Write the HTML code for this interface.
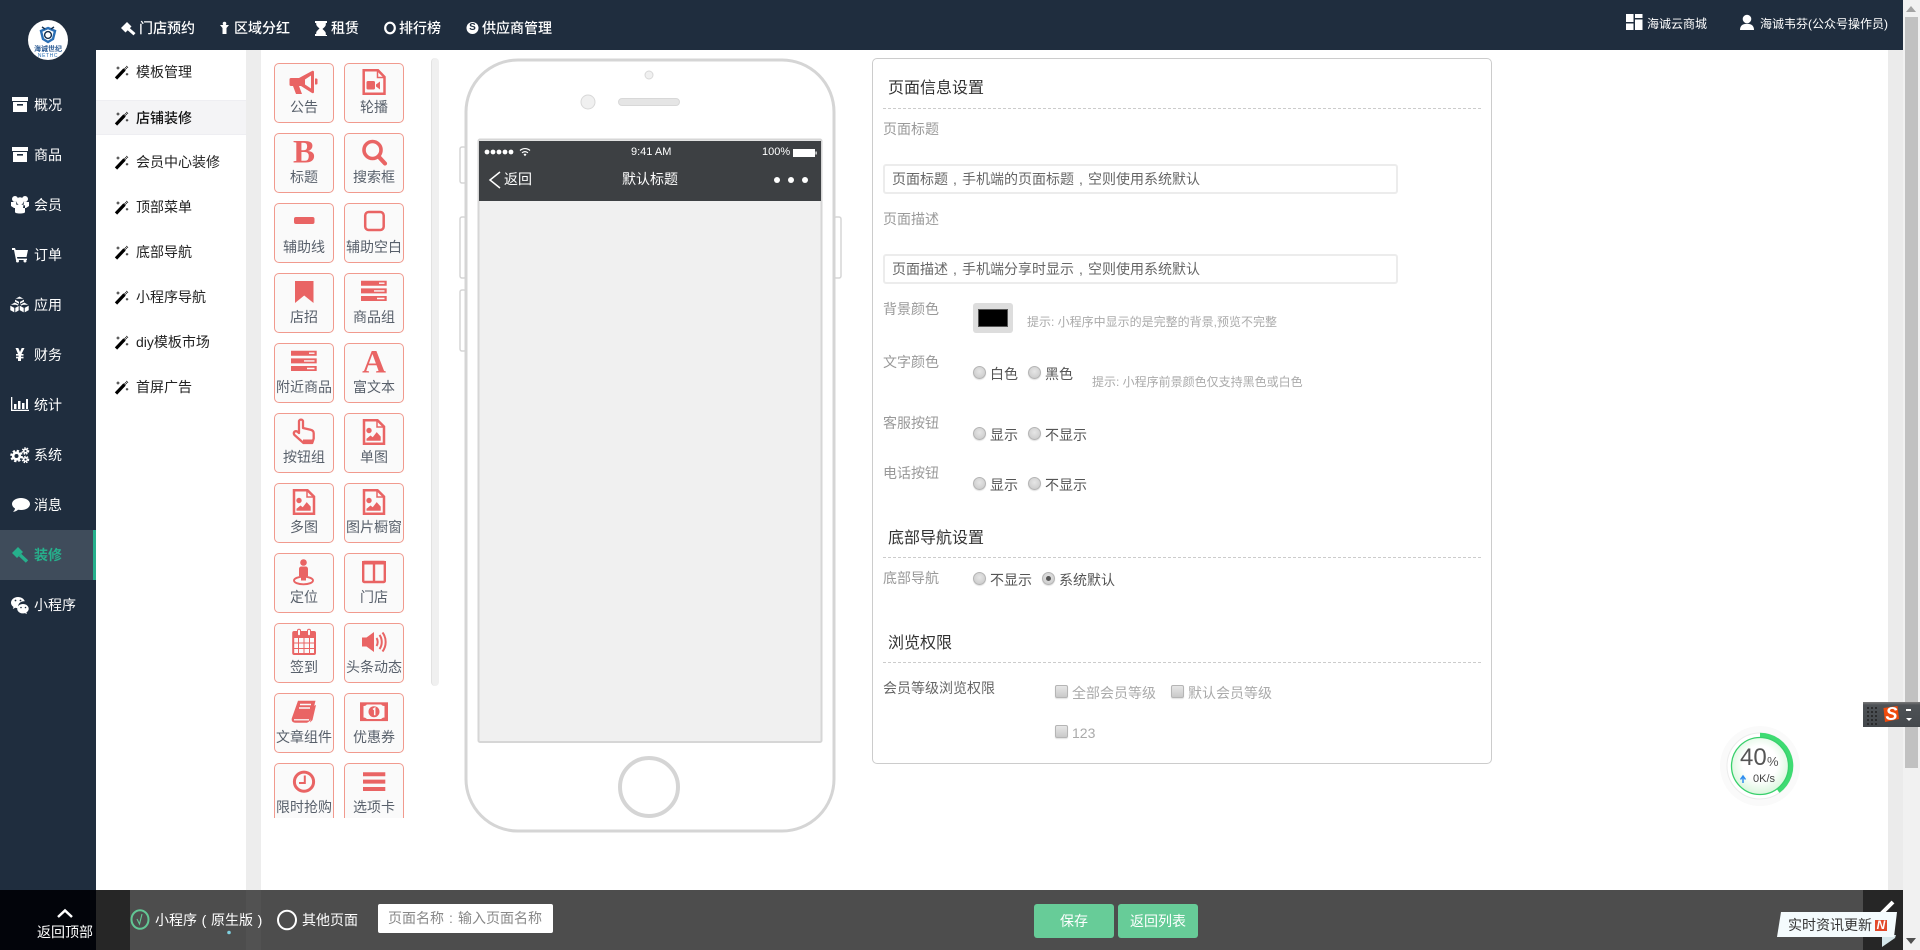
<!DOCTYPE html>
<html lang="zh">
<head>
<meta charset="utf-8">
<title>店铺装修</title>
<style>
html,body{margin:0;padding:0;width:1920px;height:950px;overflow:hidden;background:#fff}
body{font-family:"Liberation Sans","Noto Sans CJK SC",sans-serif;font-size:14px;color:#333;position:relative}
.a{position:absolute}
.t{position:absolute;white-space:nowrap;line-height:20px}
.w{color:#fff}
.lb{color:#999}
.p{display:inline-block;width:14px;text-align:center}
.r{position:absolute;width:11px;height:11px;border-radius:50%;border:1px solid #b5b5b5;background:radial-gradient(circle at 50% 40%,#e6e6e6,#c6c6c6);box-shadow:0 1px 1px rgba(0,0,0,.12)}
.k{position:absolute;width:11px;height:11px;border-radius:2px;border:1px solid #b5b5b5;background:linear-gradient(#e6e6e6,#c9c9c9);box-shadow:0 1px 1px rgba(0,0,0,.12)}
.h{position:absolute;white-space:nowrap;line-height:20px;font-size:16px;color:#333}
.d{position:absolute;left:883px;width:598px;border-top:1px dashed #ccc;height:0}
.in{position:absolute;left:883px;width:504px;height:26px;border:2px solid #ececec;border-radius:3px;line-height:26px;padding-left:7px;color:#666;background:#fff;white-space:nowrap}
.rt{color:#555}
.hint{font-size:12px;color:#aaa}
#cards{position:absolute;left:274px;top:63px;width:140px;height:755px;overflow:hidden}
.c{float:left;position:relative;box-sizing:border-box;width:60px;height:60px;margin:0 10px 10px 0;border:1px solid #f19a8e;border-radius:5px;background:#fafafa}
.c svg{position:absolute;left:-1px;top:-1px;width:60px;height:36px;overflow:visible}
.c span{position:absolute;left:-3px;right:-3px;top:33px;text-align:center;line-height:20px;color:#58606b;white-space:nowrap}
.sm{position:absolute;left:136px;color:#222;line-height:20px;white-space:nowrap}
</style>
</head>
<body>

<!-- layout blocks -->
<div class="a" style="left:0;top:0;width:96px;height:950px;background:#1f2d3e"></div>
<div class="a" style="left:96px;top:0;width:1807px;height:50px;background:#1f2d3e"></div>
<div class="a" style="left:246px;top:50px;width:15px;height:840px;background:#ededed"></div>
<div class="a" style="left:1888px;top:50px;width:15px;height:840px;background:#ebebeb"></div>
<div class="a" style="left:96px;top:100px;width:150px;height:35px;background:#f4f4f6;border-top:1px solid #eeeef2;border-bottom:1px solid #eeeef2;box-sizing:border-box"></div>
<div class="a" style="left:0;top:530px;width:93px;height:50px;background:#3f4c5b;border-right:3px solid #26b08c"></div>

<!-- scrollbar -->
<div class="a" style="left:1903px;top:0;width:17px;height:950px;background:#f1f1f1"></div>
<div class="a" style="left:1905px;top:17px;width:13px;height:751px;background:#c1c1c1"></div>

<!-- icon column scrollbar -->
<div class="a" style="left:431px;top:58px;width:8px;height:628px;background:#f0f0f0;border-left:1px solid #e2e2e2;box-sizing:border-box;border-radius:4px"></div>

<!-- global icons + phone -->
<svg class="a" style="left:0;top:0" width="1920" height="950" viewBox="0 0 1920 950" fill="none">
  <!-- scrollbar arrows -->
  <path d="M1911 6l5 6h-10z" fill="#a3a3a3"/>
  <path d="M1911 944l-5-6h10z" fill="#505050"/>

  <!-- logo -->
  <ellipse cx="48" cy="40" rx="20" ry="20" fill="#fff"/>
  <path d="M48 28l7 3-2 8-5 3-5-3-2-8z" stroke="#2a6fb5" stroke-width="2.4" fill="#fff"/>
  <circle cx="48" cy="35" r="3.4" stroke="#15304f" stroke-width="1.4"/>
  <path d="M42 27l3 2M54 27l-3 2" stroke="#15304f" stroke-width="1.4"/>

  <!-- wand icons -->
  <g id="wands" stroke-linecap="butt">
    <g transform="translate(115,65)"><path d="M1 13.5L9.500 4.500" stroke="#000" stroke-width="3.200"/><path d="M9.500 4.500L12.500 1.500" stroke="#333" stroke-width="2.400" stroke-dasharray="1 .6"/><path d="M3 1.500v3M1.500 3h3M12 8v2.500M10.800 9.200h2.500" stroke="#222" stroke-width=".9"/></g>
    <g transform="translate(115,111)"><path d="M1 13.500L9.500 4.500" stroke="#000" stroke-width="3.200"/><path d="M9.500 4.500L12.500 1.500" stroke="#333" stroke-width="2.400" stroke-dasharray="1 .6"/><path d="M3 1.500v3M1.500 3h3M12 8v2.500M10.800 9.200h2.500" stroke="#222" stroke-width=".9"/></g>
    <g transform="translate(115,155)"><path d="M1 13.500L9.500 4.500" stroke="#000" stroke-width="3.200"/><path d="M9.500 4.500L12.500 1.500" stroke="#333" stroke-width="2.400" stroke-dasharray="1 .6"/><path d="M3 1.500v3M1.500 3h3M12 8v2.500M10.800 9.200h2.500" stroke="#222" stroke-width=".9"/></g>
    <g transform="translate(115,200)"><path d="M1 13.500L9.500 4.500" stroke="#000" stroke-width="3.200"/><path d="M9.500 4.500L12.500 1.500" stroke="#333" stroke-width="2.400" stroke-dasharray="1 .6"/><path d="M3 1.500v3M1.500 3h3M12 8v2.500M10.800 9.200h2.500" stroke="#222" stroke-width=".9"/></g>
    <g transform="translate(115,245)"><path d="M1 13.500L9.500 4.500" stroke="#000" stroke-width="3.200"/><path d="M9.500 4.500L12.500 1.500" stroke="#333" stroke-width="2.400" stroke-dasharray="1 .6"/><path d="M3 1.500v3M1.500 3h3M12 8v2.500M10.800 9.200h2.500" stroke="#222" stroke-width=".9"/></g>
    <g transform="translate(115,290)"><path d="M1 13.500L9.500 4.500" stroke="#000" stroke-width="3.200"/><path d="M9.500 4.500L12.500 1.500" stroke="#333" stroke-width="2.400" stroke-dasharray="1 .6"/><path d="M3 1.500v3M1.500 3h3M12 8v2.500M10.800 9.200h2.500" stroke="#222" stroke-width=".9"/></g>
    <g transform="translate(115,335)"><path d="M1 13.500L9.500 4.500" stroke="#000" stroke-width="3.200"/><path d="M9.500 4.500L12.500 1.500" stroke="#333" stroke-width="2.400" stroke-dasharray="1 .6"/><path d="M3 1.500v3M1.500 3h3M12 8v2.500M10.800 9.200h2.500" stroke="#222" stroke-width=".9"/></g>
    <g transform="translate(115,380)"><path d="M1 13.500L9.500 4.500" stroke="#000" stroke-width="3.200"/><path d="M9.500 4.500L12.500 1.500" stroke="#333" stroke-width="2.400" stroke-dasharray="1 .6"/><path d="M3 1.500v3M1.500 3h3M12 8v2.500M10.800 9.200h2.500" stroke="#222" stroke-width=".9"/></g>
  </g>

  <!-- sidebar icons -->
  <g fill="#fff">
    <path d="M12 97h16v4H12zM13 102h14v10H13zM17 104v1.600h6V104z" fill-rule="evenodd"/>
    <path d="M12 147h16v4H12zM13 152h14v10H13zM17 154v1.600h6V154z" fill-rule="evenodd"/>
    <circle cx="15" cy="199" r="3"/><circle cx="25" cy="199" r="3"/><circle cx="20" cy="201" r="3.700"/>
    <path d="M11 202h5l1 6-3 0-3-2zM29 202h-5l-1 6 3 0 3-2zM15 206c0-1 2-1.500 5-1.500s5 .5 5 1.500v6c0 1-2 1.500-5 1.500s-5-.5-5-1.500z"/>
    <path d="M12 248h3l.7 2h12.300l-1.500 7H17l.4 1.600H27V260H16l-2-10h-2z"/><circle cx="17.500" cy="261" r="1.500"/><circle cx="25" cy="261" r="1.500"/>
    <path d="M15.500 348h2.800l1.700 4 1.700-4h2.800l-3 6h2v1.600h-2.500v1.200h2.500v1.600h-2.500v2.600h-3v-2.600H16v-1.600h2.500v-1.200H16v-1.600h2z"/>
    <path d="M11 397h1.300v12.700H29v1.300H11zM14 404h2.500v5H14zM18 401h2.500v8H18zM22 403h2.500v6H22zM26 399h2v10h-2z"/>
    <path d="M21 510c-1 0-2 0-3-.2-1 1-3 2-5 2 1-1 2-2 2-3.300-2-1.200-3-3-3-4.500 0-3.500 4-6 9-6s9 2.500 9 6-4 6-9 6z"/>
    <path d="M18 597c-4 0-7 2.700-7 5.800 0 1.800 1 3.200 2.500 4.200l-.7 2 2.500-1.200c.8.200 1.500.4 2.400.4h.7c-.2-.5-.3-1-.3-1.600 0-3 2.700-5.300 6-5.300h.6c-.6-2.500-3.300-4.300-6.700-4.300z"/>
    <path d="M23 604c-3.200 0-5.800 2.100-5.800 4.700s2.600 4.700 5.800 4.700c.7 0 1.300-.1 1.900-.3l2 1-.5-1.700c1.300-.9 2.300-2.200 2.300-3.700 0-2.600-2.500-4.700-5.700-4.700z"/>
  </g>
  <!-- cubes (应用) -->
  <g fill="#fff" stroke="#1f2d3e" stroke-width="1">
    <path d="M19.500 296l5 2.800v5.600l-5 2.800-5-2.800v-5.600zM14.500 298.800l5 2.800 5-2.800M19.500 301.600v5.600"/>
    <path d="M14.800 302l5 2.800v5.600l-5 2.800-5-2.800v-5.600zM9.800 304.800l5 2.800 5-2.800M14.800 307.600v5.600"/>
    <path d="M24.200 302l5 2.800v5.600l-5 2.800-5-2.800v-5.600zM19.200 304.800l5 2.800 5-2.800M24.200 307.600v5.600"/>
  </g>
  <circle cx="15.500" cy="600.500" r=".9" fill="#1f2d3e"/><circle cx="20.500" cy="600.500" r=".9" fill="#1f2d3e"/>
  <circle cx="21" cy="607.500" r=".8" fill="#1f2d3e"/><circle cx="25.500" cy="607.500" r=".8" fill="#1f2d3e"/>
  <g stroke="#fff">
    <circle cx="16.500" cy="456" r="3.300" stroke-width="2.600"/>
    <circle cx="16.500" cy="456" r="5.200" stroke-width="2.200" stroke-dasharray="2.300 1.800"/>
    <circle cx="25.500" cy="451" r="1.800" stroke-width="1.500"/>
    <circle cx="25.500" cy="451" r="3" stroke-width="1.500" stroke-dasharray="1.500 1"/>
    <circle cx="25.500" cy="459.500" r="1.800" stroke-width="1.500"/>
    <circle cx="25.500" cy="459.500" r="3" stroke-width="1.500" stroke-dasharray="1.500 1"/>
  </g>
  <path d="M12 553l6-6 5 5-6 6z" fill="#26b08c"/><path d="M20 555l7 6.500" stroke="#26b08c" stroke-width="3.400"/>

  <!-- top nav icons -->
  <path d="M121 28l6-6 4.500 4.500-6 6z" fill="#fff"/><path d="M128.500 29l6 5.300" stroke="#fff" stroke-width="3"/>
  <path d="M220 25h9l-2.500 3v6h-4v-6z" fill="#fff"/><circle cx="224.500" cy="23.500" r="1.800" fill="#fff"/>
  <path d="M315 21h12v2h-1.200v1.500c0 2-2 3-3.300 4.500 1.300 1.500 3.300 2.500 3.300 4.500V35H327v1h-12v-2h1.200v-1c0-2 2-3 3.300-4.500-1.300-1.500-3.300-2.500-3.300-4.500V23H315z" fill="#fff"/>
  <ellipse cx="390" cy="28" rx="4.800" ry="5.300" stroke="#fff" stroke-width="2.200"/>
  <circle cx="472.500" cy="28" r="6" fill="#fff"/>

  <!-- right header icons -->
  <path d="M1626 14h7.500v8H1626zM1635 14h7.500v4H1635zM1635 19.500h7.500V30H1635zM1626 23.500h7.500V30H1626z" fill="#fff"/>
  <circle cx="1747" cy="19" r="4.300" fill="#fff"/><path d="M1740 30c0-4.500 3-6.200 7-6.200s7 1.700 7 6.200z" fill="#fff"/>

  <!-- phone -->
  <rect x="460" y="147" width="6" height="36" rx="2" fill="#fff" stroke="#d5d5d5" stroke-width="1.500"/>
  <rect x="460" y="217" width="6" height="61" rx="2" fill="#fff" stroke="#d5d5d5" stroke-width="1.500"/>
  <rect x="460" y="290" width="6" height="61" rx="2" fill="#fff" stroke="#d5d5d5" stroke-width="1.500"/>
  <rect x="834" y="217" width="7" height="61" rx="2" fill="#fff" stroke="#d5d5d5" stroke-width="1.500"/>
  <rect x="466" y="60" width="368" height="771" rx="52" fill="#fff" stroke="#d5d5d5" stroke-width="3"/>
  <circle cx="649" cy="75" r="4" fill="#f0f0f0" stroke="#d8d8d8"/>
  <circle cx="588" cy="102" r="7" fill="#f0f0f0" stroke="#d8d8d8"/>
  <rect x="618.500" y="98.500" width="61" height="7" rx="3.500" fill="#e5e5e5" stroke="#d8d8d8"/>
  <rect x="478.500" y="139.500" width="343" height="602.500" rx="1.500" fill="#f0f0f0" stroke="#d6d6d6" stroke-width="2"/>
  <path d="M479 141h342v60H479z" fill="#3d4043"/>
  <circle cx="649" cy="787" r="29" fill="#fff" stroke="#d5d5d5" stroke-width="4"/>
  <g fill="#fff">
    <circle cx="487" cy="152" r="2.400"/><circle cx="493" cy="152" r="2.400"/><circle cx="499" cy="152" r="2.400"/><circle cx="505" cy="152" r="2.400"/><circle cx="511" cy="152" r="2.400"/>
  </g>
  <path d="M520 150.500c3-2.600 7-2.600 10 0M522 152.800c2-1.600 4-1.600 6 0" stroke="#fff" stroke-width="1.200"/><path d="M523.500 154.500l1.500-1 1.500 1-1.500 1.700z" fill="#fff"/>
  <rect x="793.500" y="149.500" width="21" height="7" fill="#fff" stroke="#fff"/><rect x="815.500" y="151.500" width="1.200" height="3" fill="#fff"/>
  <path d="M500 172l-10 8 10 8" stroke="#fff" stroke-width="1.500"/>
  <circle cx="777" cy="180" r="3" fill="#fff"/><circle cx="791" cy="180" r="3" fill="#fff"/><circle cx="805" cy="180" r="3" fill="#fff"/>

  <!-- progress circle -->
  <defs>
    <radialGradient id="gg" cx="50%" cy="45%" r="55%"><stop offset="55%" stop-color="#fff"/><stop offset="100%" stop-color="#d9f6dc"/></radialGradient>
  </defs>
  <circle cx="1760" cy="766" r="40" fill="#fafafa"/>
  <circle cx="1760" cy="766" r="33" fill="#fff" stroke="#ececec"/>
  <path d="M1760 735A31 31 0 0 1 1778.200 791.100" stroke="#3edb72" stroke-width="4.500"/>
  <circle cx="1760" cy="766" r="28.500" fill="url(#gg)" stroke="#38d06c" stroke-width="1.300"/>
  <path d="M1743 783v-6M1740.500 779.500l2.500-3.500 2.500 3.500" stroke="#2f8df0" stroke-width="1.500"/>
</svg>

<!-- logo text -->
<div class="t" style="left:34px;top:46px;width:28px;font-size:7px;line-height:8px;color:#2a5a93;text-align:center;font-weight:bold">海诚世纪</div>
<div class="t" style="left:34px;top:53px;width:28px;font-size:5px;line-height:6px;color:#2a6fb5;text-align:center;letter-spacing:.6px">NETHC</div>

<!-- sidebar text -->
<div class="t w" style="left:34px;top:95px">概况</div>
<div class="t w" style="left:34px;top:145px">商品</div>
<div class="t w" style="left:34px;top:195px">会员</div>
<div class="t w" style="left:34px;top:245px">订单</div>
<div class="t w" style="left:34px;top:295px">应用</div>
<div class="t w" style="left:34px;top:345px">财务</div>
<div class="t w" style="left:34px;top:395px">统计</div>
<div class="t w" style="left:34px;top:445px">系统</div>
<div class="t w" style="left:34px;top:495px">消息</div>
<div class="t" style="left:34px;top:545px;color:#26b08c;font-weight:bold">装修</div>
<div class="t w" style="left:34px;top:595px">小程序</div>

<!-- top nav -->
<div class="t w" style="left:139px;top:18px;font-weight:500">门店预约</div>
<div class="t w" style="left:234px;top:18px;font-weight:500">区域分红</div>
<div class="t w" style="left:331px;top:18px;font-weight:500">租赁</div>
<div class="t w" style="left:399px;top:18px;font-weight:500">排行榜</div>
<div class="t" style="left:468px;top:18px;width:9px;text-align:center;font-size:10px;font-weight:bold;color:#1f2d3e">S</div>
<div class="t w" style="left:482px;top:18px;font-weight:500">供应商管理</div>
<div class="t w" style="left:1647px;top:14px;font-size:12px">海诚云商城</div>
<div class="t w" style="left:1760px;top:14px;font-size:12px">海诚韦芬(公众号操作员)</div>

<!-- submenu -->
<div class="sm" style="top:62px">模板管理</div>
<div class="sm" style="top:108px;font-weight:500;color:#111">店铺装修</div>
<div class="sm" style="top:152px">会员中心装修</div>
<div class="sm" style="top:197px">顶部菜单</div>
<div class="sm" style="top:242px">底部导航</div>
<div class="sm" style="top:287px">小程序导航</div>
<div class="sm" style="top:332px">diy模板市场</div>
<div class="sm" style="top:377px">首屏广告</div>

<!-- component cards -->
<div id="cards">
  <div class="c"><svg viewBox="0 0 60 36"><path d="M17 15h8L38 8c1-.6 2 0 2 1v20c0 1-1 1.600-2 1l-11-7h-2l3 8h-6l-3-8h-2c-1 0-1.500-.6-1.500-1.500v-5c0-1 .5-1.500 1.500-1.500z" fill="#e96464"/><path d="M37 12.500l-6 4v5l6 4z" fill="#fafafa"/><path d="M41 15.500h1.500c.6 0 1 .5 1 1v4c0 .6-.4 1-1 1H41z" fill="#e96464"/></svg><span>公告</span></div>
  <div class="c"><svg viewBox="0 0 60 36"><path d="M19.700 7.200H34l6.500 6.800V30.800H19.700z" stroke="#e96464" stroke-width="2.500" fill="#fafafa"/><path d="M33.500 7.500v7h7" stroke="#e96464" stroke-width="1.500" fill="none"/><rect x="22.500" y="18" width="8.500" height="8.500" rx="1.500" fill="#e96464"/><path d="M32 21.500l4-3v8l-4-3z" fill="#e96464"/></svg><span>轮播</span></div>

  <div class="c"><svg viewBox="0 0 60 36"><text x="30" y="29.700" text-anchor="middle" font-family="Liberation Serif,serif" font-weight="bold" font-size="33" fill="#e96464">B</text></svg><span>标题</span></div>
  <div class="c"><svg viewBox="0 0 60 36"><circle cx="28.500" cy="17" r="8.500" stroke="#e96464" stroke-width="3.600" fill="none"/><path d="M34.500 23.500L41 30.500" stroke="#e96464" stroke-width="4.200" stroke-linecap="round"/></svg><span>搜索框</span></div>

  <div class="c"><svg viewBox="0 0 60 36"><rect x="20" y="14" width="20.500" height="7" rx="2" fill="#e96464"/></svg><span>辅助线</span></div>
  <div class="c"><svg viewBox="0 0 60 36"><rect x="21.200" y="9" width="18.500" height="18" rx="3.500" stroke="#e96464" stroke-width="2.500" fill="none"/></svg><span>辅助空白</span></div>

  <div class="c"><svg viewBox="0 0 60 36"><path d="M21 8h18.500v22L30.200 22.500 21 30z" fill="#e96464"/></svg><span>店招</span></div>
  <div class="c"><svg viewBox="0 0 60 36"><path d="M17 7.700h25.700v5H17zM17 15.400h25.700v5H17zM17 23h25.700v5H17z" fill="#e96464"/><path d="M35 9.500h5.500v1.400H35zM30 17.200h10.500v1.400H30zM33 24.800h7.500v1.400H33z" fill="#fafafa"/></svg><span>商品组</span></div>

  <div class="c"><svg viewBox="0 0 60 36"><path d="M17 7.700h25.700v5H17zM17 15.400h25.700v5H17zM17 23h25.700v5H17z" fill="#e96464"/><path d="M35 9.500h5.500v1.400H35zM30 17.200h10.500v1.400H30zM33 24.800h7.500v1.400H33z" fill="#fafafa"/></svg><span>附近商品</span></div>
  <div class="c"><svg viewBox="0 0 60 36"><text x="30" y="29.700" text-anchor="middle" font-family="Liberation Serif,serif" font-weight="bold" font-size="33" fill="#e96464">A</text></svg><span>富文本</span></div>

  <div class="c"><svg viewBox="0 0 60 36"><path d="M25 8.500c0-2.500 4-2.500 4 0v6.500l7.500 1.700c2 .5 3.200 1.700 3.200 3.500v5.300l-1.500 4.500h-8.700L20.500 22c-1.500-2-.3-3.800 1.500-3.800 1 0 2 .8 3 1.800z" stroke="#e96464" stroke-width="2.300" fill="#fafafa" stroke-linejoin="round"/><path d="M29 26.500h10l-1 4.500h-9z" fill="#e96464"/></svg><span>按钮组</span></div>
  <div class="c"><svg viewBox="0 0 60 36"><path d="M20 7.200h13.500L40 13.700V30.800H20z" stroke="#e96464" stroke-width="2.500" fill="#fafafa"/><path d="M33 7.500v6.500h7" stroke="#e96464" stroke-width="1.500" fill="none"/><circle cx="25" cy="17.500" r="2.700" fill="#e96464"/><path d="M22.500 27.800v-2l4-3.300 2.200 1.800 4-5.200 4 4.500v4.200z" fill="#e96464"/></svg><span>单图</span></div>

  <div class="c"><svg viewBox="0 0 60 36"><path d="M20 7.200h13.500L40 13.700V30.800H20z" stroke="#e96464" stroke-width="2.500" fill="#fafafa"/><path d="M33 7.500v6.500h7" stroke="#e96464" stroke-width="1.500" fill="none"/><circle cx="25" cy="17.500" r="2.700" fill="#e96464"/><path d="M22.500 27.800v-2l4-3.300 2.200 1.800 4-5.200 4 4.500v4.200z" fill="#e96464"/></svg><span>多图</span></div>
  <div class="c"><svg viewBox="0 0 60 36"><path d="M20 7.200h13.500L40 13.700V30.800H20z" stroke="#e96464" stroke-width="2.500" fill="#fafafa"/><path d="M33 7.500v6.500h7" stroke="#e96464" stroke-width="1.500" fill="none"/><circle cx="25" cy="17.500" r="2.700" fill="#e96464"/><path d="M22.500 27.800v-2l4-3.300 2.200 1.800 4-5.200 4 4.500v4.200z" fill="#e96464"/></svg><span>图片橱窗</span></div>

  <div class="c"><svg viewBox="0 0 60 36"><circle cx="29.500" cy="9.500" r="3.300" fill="#e96464"/><path d="M25 16c0-1.500 1-2.500 2.500-2.500h4c1.500 0 2.500 1 2.500 2.500v7h-2v4.500h-5V23h-2z" fill="#e96464"/><ellipse cx="29.500" cy="27.500" rx="9.500" ry="3.800" stroke="#e96464" stroke-width="1.900" fill="none"/></svg><span>定位</span></div>
  <div class="c"><svg viewBox="0 0 60 36"><rect x="19.200" y="9" width="21.600" height="20" rx="1" stroke="#e96464" stroke-width="2.400" fill="none"/><path d="M18 8h24v3.500H18z" fill="#e96464"/><path d="M30 9v20" stroke="#e96464" stroke-width="2.400"/></svg><span>门店</span></div>

  <div class="c"><svg viewBox="0 0 60 36"><rect x="19.200" y="9" width="21.800" height="22" rx="1" stroke="#e96464" stroke-width="2" fill="#fafafa"/><path d="M19 9h22v6H19z" fill="#e96464"/><path d="M19 20h22M19 25.500h22M24.500 15v15M30 15v15M35.500 15v15" stroke="#e96464" stroke-width="1"/><rect x="23.500" y="6.300" width="3" height="6.500" rx="1.500" fill="#fafafa" stroke="#e96464" stroke-width="1"/><rect x="33.500" y="6.300" width="3" height="6.500" rx="1.500" fill="#fafafa" stroke="#e96464" stroke-width="1"/></svg><span>签到</span></div>
  <div class="c"><svg viewBox="0 0 60 36"><path d="M18 14.500h4.500L30 9v20l-7.500-5.500H18z" fill="#e96464"/><path d="M32.500 15c1.600 2.200 1.600 5.800 0 8M35.500 12c3 4 3 10 0 14M38.500 9.500c4.200 5.500 4.200 13.500 0 19" stroke="#e96464" stroke-width="2" fill="none"/></svg><span>头条动态</span></div>

  <div class="c"><svg viewBox="0 0 60 36"><path d="M24 7.700h17.500L37 25.500c-.5 2-2 3.500-4 4.200H21.500c-3 0-4.300-2-3.700-4.500z" fill="#e96464"/><path d="M26 11.500h11M25 15h11" stroke="#fafafa" stroke-width="1.500"/><path d="M20 26.800h15" stroke="#fafafa" stroke-width="1.300"/><path d="M39.500 13l2.500-1-3.500 15-2.500 2.500z" fill="#e96464"/></svg><span>文章组件</span></div>
  <div class="c"><svg viewBox="0 0 60 36"><rect x="16" y="9.300" width="28" height="18.800" fill="#e96464"/><path d="M19.500 13c2 0 3-1 3.200-1.500h14.600c.2.500 1.200 1.500 3.200 1.500v11.500c-2 0-3 1-3.200 1.500H22.700c-.2-.5-1.200-1.500-3.200-1.500z" fill="#fafafa"/><circle cx="30" cy="18.700" r="5.500" fill="#e96464"/><path d="M29 16.500l1.700-1.200v7" stroke="#fafafa" stroke-width="1.500" fill="none"/></svg><span>优惠券</span></div>

  <div class="c"><svg viewBox="0 0 60 36"><circle cx="30" cy="18.700" r="9.600" stroke="#e96464" stroke-width="3" fill="none"/><path d="M30.800 12.500v7.500H25" stroke="#e96464" stroke-width="2" fill="none"/></svg><span>限时抢购</span></div>
  <div class="c"><svg viewBox="0 0 60 36"><path d="M19 9.300h22.300v4H19zM19 16.600h22.300v4H19zM19 24h22.300v4H19z" fill="#e96464"/></svg><span>选项卡</span></div>
</div>

<!-- phone text -->
<div class="t w" style="left:631px;top:142px;font-size:11px">9:41 AM</div>
<div class="t w" style="left:762px;top:142px;font-size:11px">100%</div>
<div class="t w" style="left:504px;top:169px">返回</div>
<div class="t w" style="left:622px;top:169px">默认标题</div>

<!-- form panel -->
<div class="a" style="left:872px;top:58px;width:620px;height:706px;border:1px solid #ccc;border-radius:5px;box-sizing:border-box"></div>
<div class="h" style="left:888px;top:79px">页面信息设置</div>
<div class="d" style="top:108px"></div>
<div class="t lb" style="left:883px;top:119px">页面标题</div>
<div class="in" style="top:164px">页面标题<span class="p">,</span>手机端的页面标题<span class="p">,</span>空则使用系统默认</div>
<div class="t lb" style="left:883px;top:209px">页面描述</div>
<div class="in" style="top:254px">页面描述<span class="p">,</span>手机端分享时显示<span class="p">,</span>空则使用系统默认</div>

<div class="t lb" style="left:883px;top:299px">背景颜色</div>
<div class="a" style="left:973px;top:303px;width:40px;height:30px;background:#ddd;border-radius:3px"></div>
<div class="a" style="left:978px;top:309px;width:30px;height:18px;background:#000;border:1px solid #555;box-sizing:border-box"></div>
<div class="t hint" style="left:1027px;top:312px">提示: 小程序中显示的是完整的背景,预览不完整</div>

<div class="t lb" style="left:883px;top:352px">文字颜色</div>
<div class="r" style="left:973px;top:366px"></div><div class="t rt" style="left:990px;top:364px">白色</div>
<div class="r" style="left:1028px;top:366px"></div><div class="t rt" style="left:1045px;top:364px">黑色</div>
<div class="t hint" style="left:1092px;top:372px">提示: 小程序前景颜色仅支持黑色或白色</div>

<div class="t lb" style="left:883px;top:413px">客服按钮</div>
<div class="r" style="left:973px;top:427px"></div><div class="t rt" style="left:990px;top:425px">显示</div>
<div class="r" style="left:1028px;top:427px"></div><div class="t rt" style="left:1045px;top:425px">不显示</div>

<div class="t lb" style="left:883px;top:463px">电话按钮</div>
<div class="r" style="left:973px;top:477px"></div><div class="t rt" style="left:990px;top:475px">显示</div>
<div class="r" style="left:1028px;top:477px"></div><div class="t rt" style="left:1045px;top:475px">不显示</div>

<div class="h" style="left:888px;top:529px">底部导航设置</div>
<div class="d" style="top:557px"></div>
<div class="t lb" style="left:883px;top:568px">底部导航</div>
<div class="r" style="left:973px;top:572px"></div><div class="t rt" style="left:990px;top:570px">不显示</div>
<div class="r" style="left:1042px;top:572px"></div><div class="a" style="left:1046px;top:576px;width:5px;height:5px;border-radius:50%;background:#555"></div><div class="t rt" style="left:1059px;top:570px">系统默认</div>

<div class="h" style="left:888px;top:634px">浏览权限</div>
<div class="d" style="top:662px"></div>
<div class="t" style="left:883px;top:678px;color:#666">会员等级浏览权限</div>
<div class="k" style="left:1055px;top:685px"></div><div class="t" style="left:1072px;top:683px;color:#aaa">全部会员等级</div>
<div class="k" style="left:1171px;top:685px"></div><div class="t" style="left:1188px;top:683px;color:#aaa">默认会员等级</div>
<div class="k" style="left:1055px;top:725px"></div><div class="t" style="left:1072px;top:723px;color:#aaa">123</div>

<!-- percent text -->
<div class="t" style="left:1740px;top:744px;font-size:24px;line-height:28px;color:#555">40</div>
<div class="t" style="left:1767px;top:752px;font-size:13px;color:#555">%</div>
<div class="t" style="left:1753px;top:769px;font-size:11px;color:#444">0K/s</div>

<!-- sogou bar -->
<svg class="a" style="left:1863px;top:702px" width="57" height="25" viewBox="0 0 57 25">
  <defs><linearGradient id="sg" x1="0" y1="0" x2="0" y2="1"><stop offset="0" stop-color="#7a7a7a"/><stop offset=".12" stop-color="#4e5256"/><stop offset="1" stop-color="#44484c"/></linearGradient></defs>
  <rect width="57" height="25" fill="url(#sg)"/>
  <g fill="#222"><circle cx="5" cy="6" r="1"/><circle cx="9" cy="6" r="1"/><circle cx="13" cy="6" r="1"/><circle cx="5" cy="10" r="1"/><circle cx="9" cy="10" r="1"/><circle cx="13" cy="10" r="1"/><circle cx="5" cy="14" r="1"/><circle cx="9" cy="14" r="1"/><circle cx="13" cy="14" r="1"/><circle cx="5" cy="18" r="1"/><circle cx="9" cy="18" r="1"/><circle cx="13" cy="18" r="1"/><circle cx="5" cy="22" r="1"/><circle cx="9" cy="22" r="1"/><circle cx="13" cy="22" r="1"/></g>
  <path d="M20.500 6l14-2 1.500 13-14 3z" fill="#f04a0c"/>
  <text x="28.500" y="18" text-anchor="middle" font-family="Liberation Sans,sans-serif" font-weight="bold" font-style="italic" font-size="18" fill="#fff">S</text>
  <rect x="43" y="7" width="5" height="2" fill="#fff"/><path d="M43 16h6l-3 3z" fill="#fff"/>
</svg>

<!-- bottom bar -->
<div class="a" style="left:96px;top:890px;width:1807px;height:60px;background:#4d4d4d"></div>
<div class="a" style="left:0;top:890px;width:96px;height:60px;background:#02040a"></div>
<div class="a" style="left:96px;top:890px;width:34px;height:60px;background:#262626"></div>
<div class="a" style="left:246px;top:890px;width:15px;height:60px;background:#525252"></div>
<div class="a" style="left:1863px;top:890px;width:40px;height:60px;background:#262626"></div>

<svg class="a" style="left:0;top:890px" width="1920" height="60" viewBox="0 890 1920 60" fill="none">
  <path d="M58 917l7-6.500 7 6.500" stroke="#fff" stroke-width="2.500"/>
  <ellipse cx="140" cy="919.500" rx="8.500" ry="9.300" stroke="#62c795" stroke-width="2"/>
  <path d="M137 919l2.500 5 2.500-10" stroke="#62c795" stroke-width="1.100"/>
  <ellipse cx="287" cy="920" rx="9" ry="9.300" stroke="#fff" stroke-width="2"/>
  <circle cx="229" cy="932.500" r="1.800" fill="#7fd0e0"/>
  <path d="M1880 915l13-13" stroke="#fff" stroke-width="4"/>
  <path d="M1882 947l13-9 1-3h-14z" fill="#d5e6ea"/>
  <path d="M1781 912h116l-3 25h-117z" fill="#f4fbfd"/>
  <path d="M1875 920h12v11h-12z" fill="#e2492a"/>
</svg>

<div class="t w" style="left:37px;top:922px">返回顶部</div>
<div class="t w" style="left:155px;top:910px">小程序<span class="p">(</span>原生版<span class="p">)</span></div>
<div class="t w" style="left:302px;top:910px">其他页面</div>
<div class="a" style="left:378px;top:904px;width:175px;height:29px;background:#fff;border-radius:2px;line-height:29px;padding-left:10px;box-sizing:border-box;color:#888;white-space:nowrap">页面名称<span class="p">:</span>输入页面名称</div>
<div class="a w" style="left:1034px;top:904px;width:80px;height:34px;background:#67cc98;border-radius:3px;text-align:center;line-height:34px">保存</div>
<div class="a w" style="left:1118px;top:904px;width:80px;height:34px;background:#67cc98;border-radius:3px;text-align:center;line-height:34px">返回列表</div>
<div class="t" style="left:1788px;top:915px;color:#333">实时资讯更新</div>
<div class="t" style="left:1875px;top:915px;width:12px;text-align:center;color:#fff;font-weight:bold;font-style:italic;font-size:12px">N</div>

</body>
</html>
